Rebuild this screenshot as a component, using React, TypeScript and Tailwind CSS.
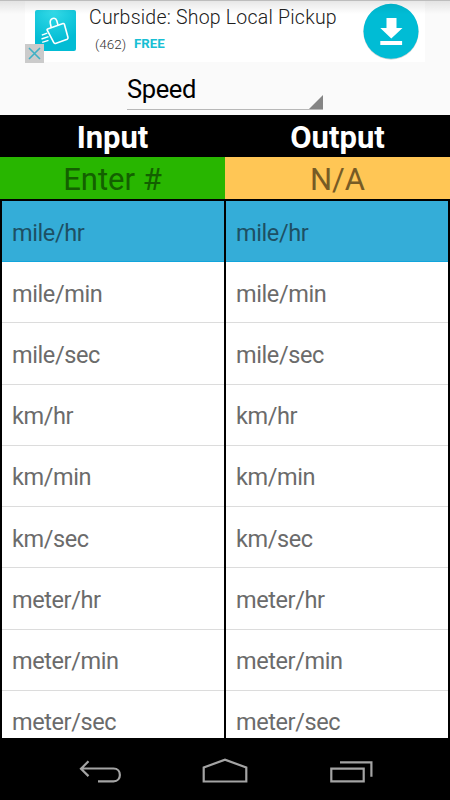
import React from "react";

const units = [
  "mile/hr",
  "mile/min",
  "mile/sec",
  "km/hr",
  "km/min",
  "km/sec",
  "meter/hr",
  "meter/min",
  "meter/sec",
];

function UnitList() {
  return (
    <ul className="h-[537px] min-w-0 flex-1 overflow-hidden bg-white">
      {units.map((unit, i) => (
        <li
          key={unit}
          className={
            i === 0
              ? "flex h-[61px] items-center border-b border-[#12a5dc] bg-[#34add8] pl-[10px] text-[#1d5064]"
              : "flex h-[61.25px] items-center border-b border-[#dcdcdc] pl-[10px] text-[#6b6b6b]"
          }
        >
          <span className="pt-[3px] text-[23.5px] leading-7 tracking-[-0.4px]">{unit}</span>
        </li>
      ))}
    </ul>
  );
}

function AdBanner() {
  return (
    <div className="relative mx-auto flex h-[62px] w-[400px] bg-white pl-[10px]">
      <svg className="mt-[9.5px] h-[41px] w-[41px] shrink-0" viewBox="0 0 41 41" fill="none">
        <defs>
          <radialGradient id="bagTile" cx="0.45" cy="0" r="0.8">
            <stop offset="0" stopColor="#35dbe8" />
            <stop offset="1" stopColor="#02bcd4" />
          </radialGradient>
        </defs>
        <rect width="41" height="41" rx="2" fill="url(#bagTile)" />
        <path d="M12.6 19 28 13.5Q29 13.3 29.4 14.2L33 27.5Q33.2 28.7 32.2 29.2L20.5 33.4Q19.2 33.8 18.8 32.6L12.2 20.2Q11.8 19.3 12.6 19Z" stroke="#fff" strokeWidth="1.6" />
        <path d="M16.2 17.5 15.3 13.2C14.5 7.8 20.5 6.8 21.7 10.6L23 15" stroke="#fff" strokeWidth="1.6" />
        <path d="m6.8 25.2 5.5-2M6.5 29l7-2.4M7.2 32.4l6.3-2" stroke="#fff" strokeWidth="1.4" />
      </svg>
      <div className="ml-[13px] pt-[6px] whitespace-nowrap">
        <div className="text-[19.5px] leading-6 font-light tracking-[0.22px] text-[#202020]">Curbside: Shop Local Pickup</div>
        <div className="mt-[4px] flex pl-[6px] text-[13.5px] leading-5">
          <span className="w-[39px] font-light text-[#333]">(462)</span>
          <span className="text-[13.3px] font-bold text-[#18bfd4]">FREE</span>
        </div>
      </div>
      <svg className="absolute top-[43.5px] left-0 h-[19px] w-[19px]" viewBox="0 0 19 19">
        <path d="M0 0h19v19H0z" fill="#cbcbcb" />
        <path d="m4 4 11 11M15 4 4 15" stroke="#3fb0c5" strokeWidth="1.6" />
      </svg>
      <svg className="absolute top-[1px] left-[336px] h-[61px] w-[61px]" viewBox="0 0 61 61">
        <circle cx="30" cy="31" r="27.7" fill="#d4d4d4" />
        <circle cx="30" cy="30.3" r="27.5" fill="#00bcd5" />
        <path d="M25.5 17h10v10h6L30.3 37.5 19.3 27h6.2zM19.3 40h21.8v4H19.3z" fill="#fff" />
      </svg>
      <div className="absolute top-0 -left-[25px] h-[14px] w-[450px] bg-linear-to-b from-black/10 to-transparent" />
      <div className="absolute top-0 -left-[25px] h-px w-[450px] bg-[#bdbdbd]" />
    </div>
  );
}

export default function App() {
  return (
    <div className="flex h-[800px] w-[450px] flex-col overflow-hidden bg-black font-[Roboto,sans-serif]">
      <header className="h-[115px] bg-[#fafafa]">
        <AdBanner />
        <div className="ml-[127px] mt-[11px] flex h-[37px] w-[196px] items-end justify-between border-b border-[#b8b8b8]">
          <span className="mb-[4px] text-[25.5px] leading-8 tracking-[-0.4px] text-black">Speed</span>
          <svg className="h-[14px] w-[14px]" viewBox="0 0 14 14">
            <path d="M14 0v14H0z" fill="#858585" />
          </svg>
        </div>
      </header>

      <div className="grid h-[42px] grid-cols-2 text-center text-[31px] leading-[46px] font-bold text-white">
        <div>Input</div>
        <div>Output</div>
      </div>
      <div className="grid h-[42px] grid-cols-2 text-center text-[31px] leading-[45px]">
        <div className="h-[42px] bg-[#28b600] text-[#136000]">Enter #</div>
        <div className="h-[42px] bg-[#ffc655] text-[#775b25]">N/A</div>
      </div>
      <main className="mt-[2px] flex gap-[2px] px-[2px]">
        <UnitList />
        <UnitList />
      </main>

      <nav className="flex flex-1 justify-center">
        <svg className="h-[62px] w-[450px]" viewBox="0 738 450 62" fill="none" stroke="#a4a4a4" strokeWidth="2.2">
          <path d="M98 781.3h15.5c8.5 0 8.5-12.8 0-12.8H81M88.5 761.3l-7.5 7.4 7.5 7.4" />
          <path d="M203.7 781.5v-14l21.3-7.8 21.3 7.8v14z" />
          <path d="M331.3 768.6h32.4v12.8h-32.4zM340 762.3h31.4v14.4" />
        </svg>
      </nav>
    </div>
  );
}
